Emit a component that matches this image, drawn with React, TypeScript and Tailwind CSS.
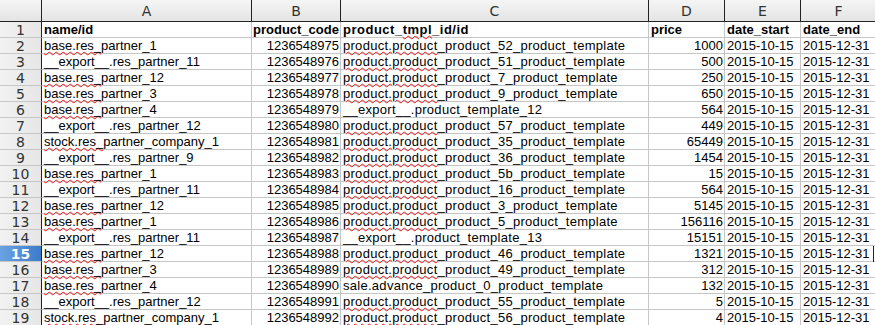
import React from 'react';

const colWidths = ['w-[210px]', 'w-[89px]', 'w-[308px]', 'w-[76px]', 'w-[76px]', 'w-[76px]'];
const letters = ['A', 'B', 'C', 'D', 'E', 'F'];

const rows: [string, string, string, string][] = [
  ['base.res_partner_1', '1236548975', 'product.product_product_52_product_template', '1000'],
  ['__export__.res_partner_11', '1236548976', 'product.product_product_51_product_template', '500'],
  ['base.res_partner_12', '1236548977', 'product.product_product_7_product_template', '250'],
  ['base.res_partner_3', '1236548978', 'product.product_product_9_product_template', '650'],
  ['base.res_partner_4', '1236548979', '__export__.product_template_12', '564'],
  ['__export__.res_partner_12', '1236548980', 'product.product_product_57_product_template', '449'],
  ['stock.res_partner_company_1', '1236548981', 'product.product_product_35_product_template', '65449'],
  ['__export__.res_partner_9', '1236548982', 'product.product_product_36_product_template', '1454'],
  ['base.res_partner_1', '1236548983', 'product.product_product_5b_product_template', '15'],
  ['__export__.res_partner_11', '1236548984', 'product.product_product_16_product_template', '564'],
  ['base.res_partner_12', '1236548985', 'product.product_product_3_product_template', '5145'],
  ['base.res_partner_1', '1236548986', 'product.product_product_5_product_template', '156116'],
  ['__export__.res_partner_11', '1236548987', '__export__.product_template_13', '15151'],
  ['base.res_partner_12', '1236548988', 'product.product_product_46_product_template', '1321'],
  ['base.res_partner_3', '1236548989', 'product.product_product_49_product_template', '312'],
  ['base.res_partner_4', '1236548990', 'sale.advance_product_0_product_template', '132'],
  ['__export__.res_partner_12', '1236548991', 'product.product_product_55_product_template', '5'],
  ['stock.res_partner_company_1', '1236548992', 'product.product_product_56_product_template', '4'],
];

const squiggle = 'underline decoration-wavy decoration-[#ee1111] decoration-1 underline-offset-[1px]';

// spell-check squiggle on the first token
function Spell({ text, prefix }: { text: string; prefix: string }) {
  if (!prefix || !text.startsWith(prefix)) return <>{text}</>;
  return (
    <>
      <span className={squiggle}>{prefix}</span>
      {text.slice(prefix.length)}
    </>
  );
}

function partnerPrefix(s: string) {
  if (s.startsWith('base.res')) return 'base.res_';
  if (s.startsWith('stock.res')) return 'stock.res_';
  return '';
}

const cell = 'shrink-0 h-4 leading-[15px] border-r border-b border-[#c6c6c6] whitespace-nowrap';
const rowHead = 'shrink-0 w-[42px] h-4 leading-[16px] border-r border-r-[#222] border-b border-b-[#c6c6c6] text-center text-[14px] font-["DejaVu_Sans",sans-serif]';

export default function App() {
  return (
    <div className="w-[875px] h-[325px] overflow-hidden bg-white text-[13px] text-black font-['Liberation_Sans',Arial,sans-serif]">
      {/* column headers */}
      <div className="flex h-[22px] border-b border-[#222] bg-linear-to-b from-[#f5f5f5] to-[#e4e4e4]">
        <div className="shrink-0 w-[42px] border-r border-[#222]" />
        {letters.map((l, i) => (
          <div
            key={l}
            className={`${colWidths[i]} shrink-0 border-r border-[#222] text-center leading-[22px] text-[14px] text-[#333] font-['DejaVu_Sans',sans-serif]`}
          >
            {l}
          </div>
        ))}
      </div>

      {/* header row */}
      <div className="flex">
        <div className={`${rowHead} bg-linear-to-r from-[#f2f2f2] to-[#e6e6e6] text-[#333]`}>1</div>
        <div className={`${cell} ${colWidths[0]} px-[2px] font-bold`}>name/id</div>
        <div className={`${cell} ${colWidths[1]} px-[1px] font-bold`}>product_code</div>
        <div className={`${cell} ${colWidths[2]} px-[2px] font-bold tracking-[0.5px]`}>
          product_<span className={squiggle}>tmpl</span>_id/id
        </div>
        <div className={`${cell} ${colWidths[3]} px-[2px] font-bold`}>price</div>
        <div className={`${cell} ${colWidths[4]} px-[2px] font-bold`}>date_start</div>
        <div className={`${cell} ${colWidths[5]} px-[2px] font-bold`}>date_end</div>
      </div>

      {rows.map((r, i) => {
        const n = i + 2;
        const active = n === 15;
        return (
          <div key={n} className="relative flex">
            <div
              className={
                active
                  ? `${rowHead} bg-linear-to-r from-[#6aa3e3] to-[#3b7bc9] text-white font-bold`
                  : `${rowHead} bg-linear-to-r from-[#f2f2f2] to-[#e6e6e6] text-[#333]`
              }
            >
              {n}
            </div>
            <div className={`${cell} ${colWidths[0]} px-[2px]`}>
              <Spell text={r[0]} prefix={partnerPrefix(r[0])} />
            </div>
            <div className={`${cell} ${colWidths[1]} pr-[1px] text-right`}>{r[1]}</div>
            <div className={`${cell} ${colWidths[2]} px-[2px] tracking-[0.28px]`}>
              <Spell text={r[2]} prefix={r[2].startsWith('product.product') ? 'product.product' : ''} />
            </div>
            <div className={`${cell} ${colWidths[3]} pr-[1px] text-right`}>{r[3]}</div>
            <div className={`${cell} ${colWidths[4]} px-[2px]`}>2015-10-15</div>
            <div className={`${cell} ${colWidths[5]} px-[2px]`}>2015-12-31</div>
            {active && <div className="absolute left-[873px] top-0 h-4 w-[1px] bg-[#222]" />}
          </div>
        );
      })}
    </div>
  );
}
